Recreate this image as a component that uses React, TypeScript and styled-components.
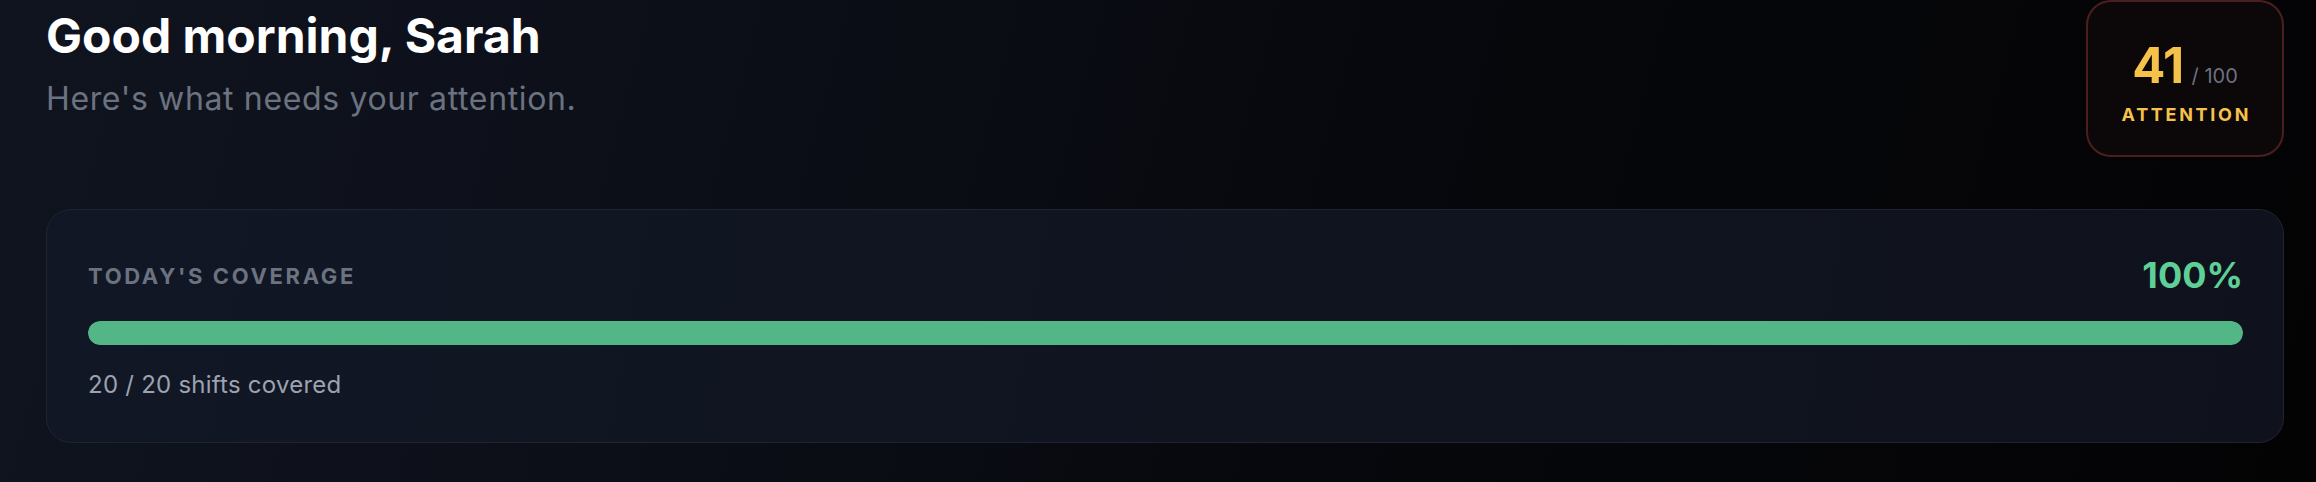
import React from "react";
import styled, { createGlobalStyle } from "styled-components";

const GlobalStyle = createGlobalStyle`
  html, body {
    margin: 0;
    padding: 0;
    background: #050508;
  }
  body {
    font-family: Inter, "Noto Sans", "Liberation Sans", sans-serif;
    -webkit-font-smoothing: antialiased;
  }
  * {
    box-sizing: border-box;
  }
`;

const Page = styled.div`
  min-height: 482px;
  padding: 0 32px 0 46px;
  background: linear-gradient(105deg, #10141f 0%, #0c0f18 30%, #07080d 58%, #030304 100%);
`;

const Header = styled.header`
  display: flex;
  justify-content: space-between;
  align-items: flex-start;
`;

const Greeting = styled.div`
  padding-top: 7px;
`;

const Title = styled.h1`
  margin: 0;
  font-size: 48px;
  line-height: 1.2;
  font-weight: 700;
  letter-spacing: 0;
  color: #ffffff;
`;

const Subtitle = styled.p`
  margin: 10px 0 0;
  font-size: 32px;
  line-height: 1.5;
  font-weight: 400;
  letter-spacing: 0.02em;
  color: #6b7280;
`;

const ScoreBadge = styled.div`
  width: 198px;
  height: 157px;
  padding-top: 39px;
  border: 2px solid #4b1f1f;
  border-radius: 25px;
  background: #0c0709;
  text-align: center;
`;

const ScoreLine = styled.div`
  display: flex;
  justify-content: center;
  align-items: baseline;
  gap: 8px;
  line-height: 1;
`;

const Score = styled.span`
  font-size: 49px;
  font-weight: 700;
  letter-spacing: -0.01em;
  color: #f5c24a;
`;

const ScoreMax = styled.span`
  font-size: 20px;
  font-weight: 400;
  color: #6b7280;
`;

const ScoreLabel = styled.div`
  margin-top: 14px;
  padding-left: 0.15em;
  font-size: 18px;
  line-height: 1.2;
  font-weight: 700;
  letter-spacing: 0.15em;
  text-transform: uppercase;
  color: #f5c24a;
`;

const Card = styled.section`
  margin-top: 52px;
  padding: 44px 40px 40px 41px;
  border: 1px solid #1e2432;
  border-radius: 25px;
  background: linear-gradient(100deg, #111725 0%, #10141f 60%, #0f121c 100%);
`;

const CardHead = styled.div`
  display: flex;
  justify-content: space-between;
  align-items: center;
`;

const CardLabel = styled.span`
  font-size: 22px;
  font-weight: 700;
  letter-spacing: 0.12em;
  color: #6b7280;
  text-transform: uppercase;
`;

const Percent = styled.span<{ $tone: string }>`
  font-size: 36px;
  line-height: 1.2;
  font-weight: 700;
  color: ${(p) => p.$tone};
`;

const Track = styled.div`
  margin-top: 24px;
  height: 24px;
  border-radius: 12px;
  background: #1f2634;
  overflow: hidden;
`;

const Fill = styled.div<{ $tone: string }>`
  height: 100%;
  border-radius: 12px;
  background: ${(p) => p.$tone};
`;

const Caption = styled.div`
  margin-top: 23px;
  font-size: 24px;
  line-height: 34px;
  letter-spacing: 0.01em;
  color: #9ca3af;
`;

const coverage = { covered: 20, total: 20 };

export default function App() {
  const pct = Math.round((coverage.covered / coverage.total) * 100);

  return (
    <>
      <GlobalStyle />
      <Page>
        <Header>
          <Greeting>
            <Title>Good morning, Sarah</Title>
            <Subtitle>Here's what needs your attention.</Subtitle>
          </Greeting>
          <ScoreBadge>
            <ScoreLine>
              <Score>41</Score>
              <ScoreMax>/ 100</ScoreMax>
            </ScoreLine>
            <ScoreLabel>Attention</ScoreLabel>
          </ScoreBadge>
        </Header>

        <Card>
          <CardHead>
            <CardLabel>Today's Coverage</CardLabel>
            <Percent $tone="#5fcf98">{pct}%</Percent>
          </CardHead>
          <Track>
            <Fill $tone="#53b686" style={{ width: `${pct}%` }} />
          </Track>
          <Caption>
            {coverage.covered} / {coverage.total} shifts covered
          </Caption>
        </Card>
      </Page>
    </>
  );
}
